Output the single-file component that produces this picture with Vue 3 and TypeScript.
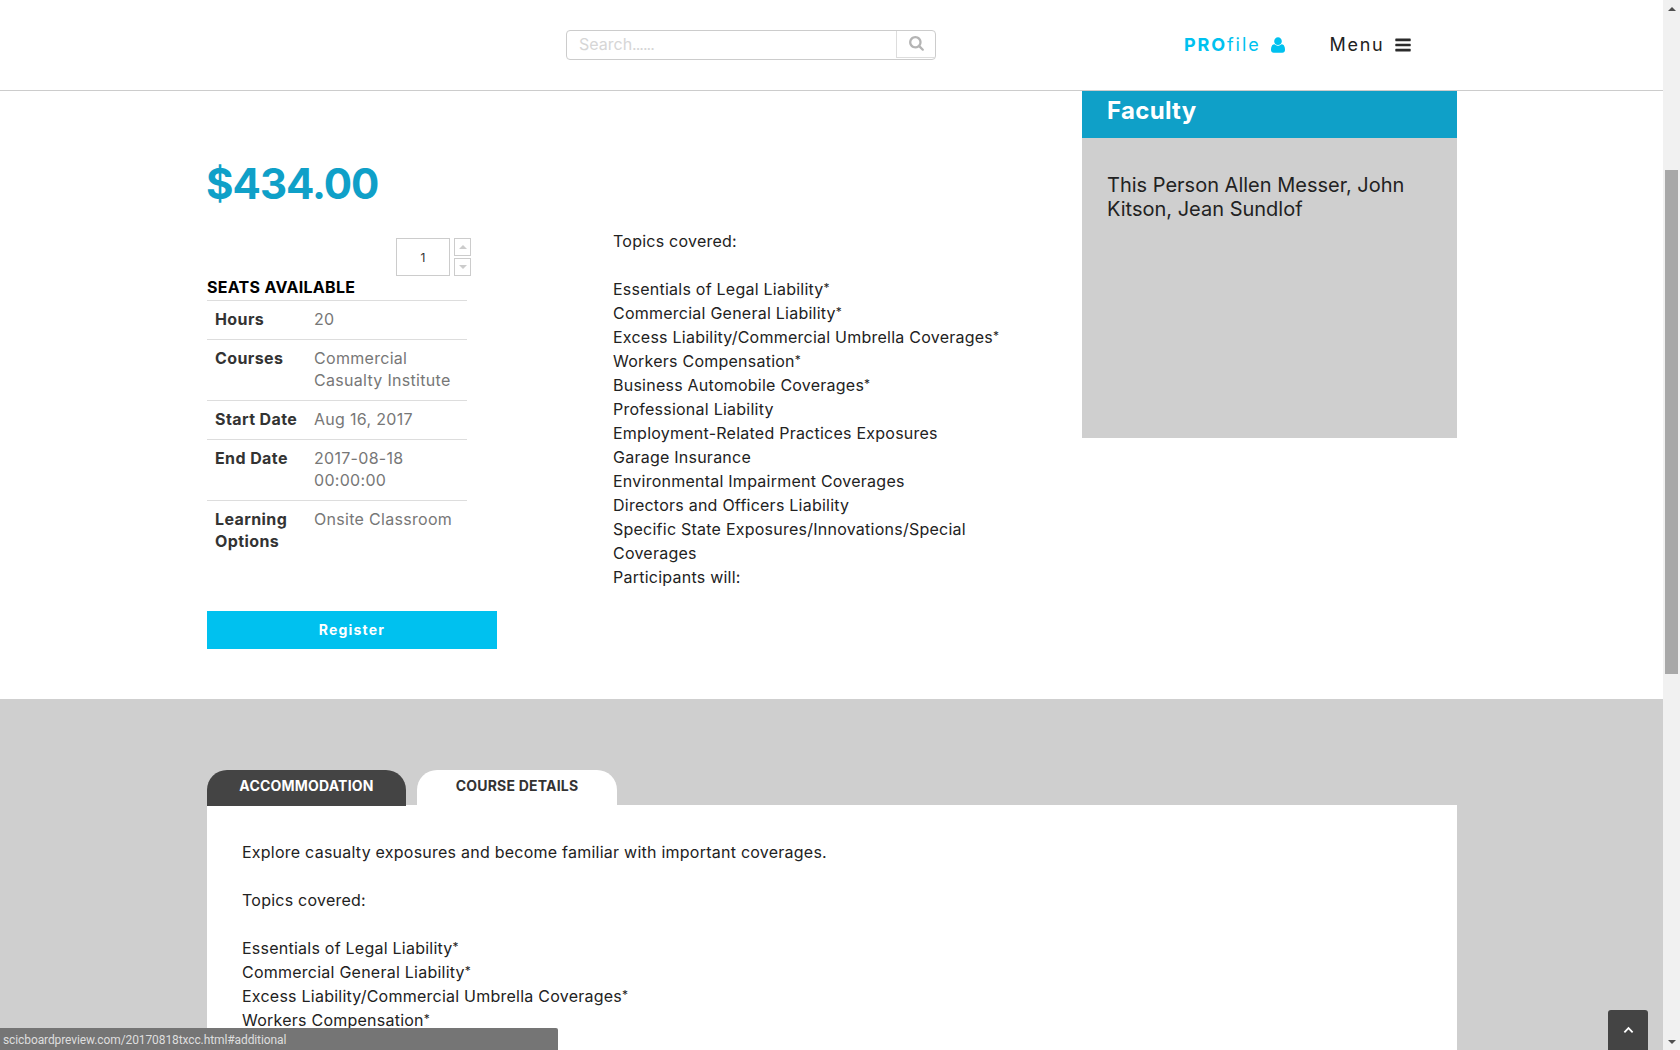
<script setup lang="ts">
const facts = [
  { label: 'Hours', value: '20' },
  { label: 'Courses', value: 'Commercial Casualty Institute' },
  { label: 'Start Date', value: 'Aug 16, 2017' },
  { label: 'End Date', value: '2017-08-18 00:00:00' },
  { label: 'Learning Options', value: 'Onsite Classroom' },
]
const topics = [
  { name: 'Essentials of Legal Liability', star: true },
  { name: 'Commercial General Liability', star: true },
  { name: 'Excess Liability/Commercial Umbrella Coverages', star: true },
  { name: 'Workers Compensation', star: true },
  { name: 'Business Automobile Coverages', star: true },
  { name: 'Professional Liability', star: false },
  { name: 'Employment-Related Practices Exposures', star: false },
  { name: 'Garage Insurance', star: false },
  { name: 'Environmental Impairment Coverages', star: false },
  { name: 'Directors and Officers Liability', star: false },
  { name: 'Specific State Exposures/Innovations/Special Coverages', star: false },
]
const panelTopics = topics.slice(0, 4)
</script>

<template>
  <div class="viewport">
    <div class="page">
      <header class="topbar">
        <div class="search">
          <span class="search-input">Search<span class="dots">......</span></span>
          <span class="search-btn">
            <svg viewBox="0 0 1664 1792" class="i-search"><path fill="#b4b4b4" d="M1152 704q0-185-131.5-316.5t-316.5-131.5-316.5 131.5-131.5 316.5 131.5 316.5 316.5 131.5 316.5-131.5 131.5-316.5zm512 832q0 52-38 90t-90 38q-54 0-90-38l-343-342q-179 124-399 124-143 0-273.5-55.5t-225-150-150-225-55.5-273.5 55.5-273.5 150-225 225-150 273.5-55.5 273.5 55.5 225 150 150 225 55.5 273.5q0 220-124 399l343 343q37 37 37 90z"/></svg>
          </span>
        </div>
        <a class="profile"><b>PRO</b>file
          <svg viewBox="0 0 1408 1792" class="i-user"><path fill="#00c1ef" d="M1408 1405q0 120-73 189.5t-194 69.5h-874q-121 0-194-69.5t-73-189.5q0-53 3.5-103.5t14-109 26.5-108.5 43-97.5 62-81 85.5-53.5 111.5-20q9 0 42 21.5t74.5 48 108 48 133.5 21.5 133.5-21.5 108-48 74.5-48 42-21.5q61 0 111.5 20t85.5 53.5 62 81 43 97.5 26.5 108.5 14 109 3.5 103.5zm-320-893q0 159-112.5 271.5t-271.5 112.5-271.5-112.5-112.5-271.5 112.5-271.5 271.5-112.5 271.5 112.5 112.5 271.5z"/></svg>
        </a>
        <a class="menu">Menu
          <svg viewBox="0 0 1536 1792" class="i-bars"><path fill="#2b2b2b" d="M1536 1344v128q0 26-19 45t-45 19h-1408q-26 0-45-19t-19-45v-128q0-26 19-45t45-19h1408q26 0 45 19t19 45zm0-512v128q0 26-19 45t-45 19h-1408q-26 0-45-19t-19-45v-128q0-26 19-45t45-19h1408q26 0 45 19t19 45zm0-512v128q0 26-19 45t-45 19h-1408q-26 0-45-19t-19-45v-128q0-26 19-45t45-19h1408q26 0 45 19t19 45z"/></svg>
        </a>
      </header>

      <section class="course">
        <div class="col-left">
          <div class="price">$434.00</div>
          <div class="qty">
            <span class="qty-input">1</span>
            <span class="spin">
              <span class="spin-btn"><i class="tri up"></i></span>
              <span class="spin-btn"><i class="tri down"></i></span>
            </span>
          </div>
          <div class="seats">SEATS AVAILABLE</div>
          <div class="facts">
            <div v-for="f in facts" :key="f.label" class="fact">
              <div class="fact-label">{{ f.label }}</div>
              <div class="fact-value">{{ f.value }}</div>
            </div>
          </div>
          <button class="register">Register</button>
        </div>
        <div class="col-mid">
          <div>Topics covered:</div>
          <div class="blank"></div>
          <div v-for="t in topics" :key="t.name">{{ t.name }}<span v-if="t.star" class="star">*</span></div>
          <div>Participants will:</div>
        </div>
        <aside class="faculty">
          <h3 class="faculty-title">Faculty</h3>
          <p class="faculty-body">This Person Allen Messer, John Kitson, Jean Sundlof</p>
        </aside>
      </section>

      <section class="details">
        <div class="tabs">
          <span class="tab dark">ACCOMMODATION</span>
          <span class="tab light">COURSE DETAILS</span>
        </div>
        <div class="panel">
          <div>Explore casualty exposures and become familiar with important coverages.</div>
          <div class="blank"></div>
          <div>Topics covered:</div>
          <div class="blank"></div>
          <div v-for="t in panelTopics" :key="t.name">{{ t.name }}<span v-if="t.star" class="star">*</span></div>
        </div>
      </section>
    </div>

    <div class="scrollbar">
      <span class="sb-arrow"><i class="sb-tri up"></i></span>
      <span class="sb-track"><span class="sb-thumb"></span></span>
      <span class="sb-arrow"><i class="sb-tri down"></i></span>
    </div>

    <div class="status">scicboardpreview.com/20170818txcc.html#additional</div>
    <a class="to-top">
      <svg viewBox="0 0 12 8" class="i-up"><path d="M1.5 6.5 6 2l4.5 4.5" fill="none" stroke="#fff" stroke-width="2"/></svg>
    </a>
  </div>
</template>

<style>
html, body { margin: 0; padding: 0; overflow: hidden; }
</style>

<style scoped>
.viewport {
  position: relative;
  display: flex;
  width: 1680px;
  height: 1050px;
  overflow: hidden;
  background: #fff;
  font-family: Inter, "Liberation Sans", sans-serif;
  color: #222;
  font-size: 16px;
  line-height: 24px;
  letter-spacing: 0.24px;
}
.page { flex: 1; min-width: 0; }
.star { font-size: 12px; line-height: 0; vertical-align: 3px; }

.topbar {
  display: flex;
  align-items: center;
  height: 90px;
  border-bottom: 1px solid #ccc;
  padding-left: 566px;
}
.search {
  display: flex;
  width: 370px;
  height: 30px;
  box-sizing: border-box;
  border: 1px solid #ccc;
  border-radius: 4px;
}
.search-input {
  flex: 1;
  padding-left: 12px;
  color: #d6d6d6;
  font-size: 16px;
  line-height: 26px;
  letter-spacing: 0;
}
.dots { letter-spacing: -1px; }
.search-btn {
  width: 38px;
  display: flex;
  align-items: center;
  justify-content: center;
  border-left: 1px solid #ddd;
  border-bottom: 1px solid #ddd;
  margin-bottom: 1px;
}
.i-search { width: 15px; height: 16px; }
.profile {
  display: flex;
  align-items: center;
  margin-left: 248px;
  color: #00c1ef;
  font-size: 18px;
  letter-spacing: 1.9px;
}
.profile b { font-weight: 700; }
.i-user { width: 14px; height: 18px; margin-left: 10px; }
.menu {
  display: flex;
  align-items: center;
  margin-left: 45px;
  color: #222;
  font-size: 18px;
  letter-spacing: 1.7px;
}
.i-bars { width: 16px; height: 18px; margin-left: 11px; }

.course {
  display: grid;
  grid-template-columns: 406px 469px 375px;
  height: 608px;
  padding-left: 207px;
}
.col-left { padding-top: 70px; }
.price {
  color: #0fa0c8;
  font-size: 42px;
  font-weight: 700;
  line-height: 46px;
  letter-spacing: -1px;
  margin-left: -1px;
}
.qty {
  display: flex;
  width: 264px;
  justify-content: flex-end;
  margin-top: 31px;
}
.qty-input {
  width: 54px;
  height: 38px;
  box-sizing: border-box;
  border: 1px solid #ccc;
  text-align: center;
  font-size: 12px;
  line-height: 38px;
  letter-spacing: 0;
  color: #333;
}
.spin {
  display: flex;
  flex-direction: column;
  gap: 2px;
  margin-left: 4px;
}
.spin-btn {
  width: 17px;
  height: 18px;
  box-sizing: border-box;
  border: 1px solid #ccc;
  display: flex;
  align-items: center;
  justify-content: center;
}
.tri {
  width: 0;
  height: 0;
  border-left: 4px solid transparent;
  border-right: 4px solid transparent;
}
.tri.up { border-bottom: 4px solid #ccc; }
.tri.down { border-top: 4px solid #ccc; }
.seats {
  color: #000;
  font-size: 16px;
  font-weight: 700;
  line-height: 22px;
  height: 24px;
  letter-spacing: 0.3px;
}
.facts { width: 260px; }
.fact {
  display: grid;
  grid-template-columns: 99px 1fr;
  border-top: 1px solid #ddd;
  padding: 7px 8px 9px 8px;
  line-height: 22px;
  font-size: 16px;
}
.fact-label { font-weight: 700; color: #333; letter-spacing: 0.4px; }
.fact-value { color: #777; letter-spacing: 0.3px; }
.register {
  display: block;
  width: 290px;
  height: 38px;
  margin-top: 50px;
  border: 0;
  background: #00c1ef;
  color: #fff;
  font-family: inherit;
  font-size: 14px;
  font-weight: 700;
  line-height: 38px;
  padding: 0;
  letter-spacing: 1.2px;
}

.col-mid { padding-top: 138px; padding-right: 50px; }
.blank { height: 24px; }

.faculty { height: 347px; background: #cfcfcf; letter-spacing: 0; }
.faculty-title {
  margin: 0;
  height: 47px;
  background: #0fa0c8;
  color: #fff;
  font-size: 24px;
  font-weight: 700;
  line-height: 40px;
  padding-left: 25px;
  letter-spacing: 0.3px;
}
.faculty-body {
  margin: 0;
  padding: 35px 25px 0;
  font-size: 20px;
  line-height: 24px;
}

.details {
  background: #cfcfcf;
  padding: 71px 206px 0 207px;
  height: 351px;
}
.tabs { display: flex; height: 35px; gap: 11px; }
.tab {
  width: 199px;
  text-align: center;
  box-sizing: border-box;
  border-radius: 20px 20px 0 0;
  font-size: 14px;
  font-weight: 700;
  line-height: 32px;
  letter-spacing: 0.2px;
}
.tab.dark { background: #444; color: #fff; height: 36px; }
.tab.light { background: #fff; color: #333; width: 200px; }
.panel {
  background: #fff;
  padding: 35px 35px;
  height: 400px;
}

.scrollbar {
  display: flex;
  flex-direction: column;
  width: 17px;
  height: 1050px;
  background: #f1f1f1;
}
.sb-arrow {
  height: 17px;
  display: flex;
  align-items: center;
  justify-content: center;
}
.sb-tri {
  width: 0;
  height: 0;
  border-left: 4px solid transparent;
  border-right: 4px solid transparent;
}
.sb-tri.up { border-bottom: 4px solid #505050; }
.sb-tri.down { border-top: 4px solid #505050; }
.sb-track { flex: 1; padding: 153px 2px 0; }
.sb-thumb { display: block; height: 504px; background: #a8a8a8; }

.status {
  position: absolute;
  left: 0;
  bottom: 0;
  width: 558px;
  height: 22px;
  box-sizing: border-box;
  background: #757575;
  border-top-right-radius: 2px;
  padding: 2px 0 0 3px;
  color: #dedede;
  font-family: Roboto, sans-serif;
  font-size: 12px;
  line-height: 20px;
  letter-spacing: -0.1px;
}
.to-top {
  position: absolute;
  left: 1608px;
  top: 1010px;
  width: 40px;
  height: 40px;
  background: #444;
  border-radius: 3px 3px 0 0;
  display: flex;
  align-items: center;
  justify-content: center;
}
.i-up { width: 11px; height: 8px; }
</style>
